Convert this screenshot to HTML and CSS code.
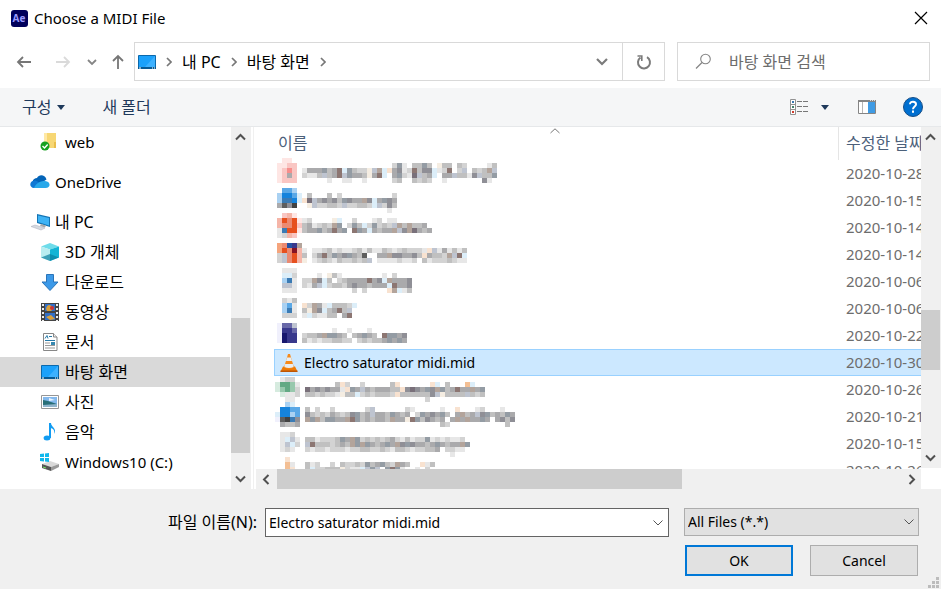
FILE: index.html
```html
<!DOCTYPE html>
<html lang="ko">
<head>
    <meta charset="UTF-8">
    <title>Choose a MIDI File</title>
    <link rel="stylesheet" href="styles.css">
</head>
<body>
    <header class="titlebar">
        <svg class="app-icon" width="17" height="17" viewBox="0 0 17 17">
            <rect width="17" height="17" rx="3" fill="#00005b"/>
            <text class="app-mark" x="8" y="12" text-anchor="middle" fill="#9999ff">Ae</text>
        </svg>
        <h1>Choose a MIDI File</h1>
        <button class="icon-btn close" aria-label="Close">
            <svg width="14" height="14" viewBox="0 0 14 14"><path d="M1 1l12 12M13 1L1 13" stroke="#000" stroke-width="1.2"/></svg>
        </button>
    </header>

    <div class="navbar">
        <button class="icon-btn" aria-label="Back"><svg width="16" height="14" viewBox="0 0 16 14"><path d="M15 7H2M7 2L2 7l5 5" fill="none" stroke="#767676" stroke-width="1.8"/></svg></button>
        <button class="icon-btn forward" aria-label="Forward"><svg width="16" height="14" viewBox="0 0 16 14"><path d="M1 7h13M9 2l5 5-5 5" fill="none" stroke="#dadada" stroke-width="1.8"/></svg></button>
        <button class="icon-btn recent" aria-label="Recent locations"><svg width="10" height="8" viewBox="0 0 10 8"><path d="M1 2l4 4 4-4" fill="none" stroke="#858585" stroke-width="1.8"/></svg></button>
        <button class="icon-btn up" aria-label="Up"><svg width="14" height="16" viewBox="0 0 14 16"><path d="M7 15V2M2 7l5-5 5 5" fill="none" stroke="#767676" stroke-width="1.8"/></svg></button>
        <div class="address">
            <nav class="crumbs">
                <svg width="18" height="14" viewBox="0 0 18 14"><use href="#i-desktop"/></svg>
                <svg class="sep" width="6" height="10"><use href="#i-sep"/></svg>
                <a href="#">내 PC</a>
                <svg class="sep" width="6" height="10"><use href="#i-sep"/></svg>
                <a href="#">바탕 화면</a>
                <svg class="sep" width="6" height="10"><use href="#i-sep"/></svg>
            </nav>
            <button class="icon-btn history" aria-label="Previous locations"><svg width="12" height="9" viewBox="0 0 12 9"><path d="M1 2l5 5 5-5" fill="none" stroke="#7b7b7b" stroke-width="2.2"/></svg></button>
            <button class="icon-btn refresh" aria-label="Refresh"><svg width="16" height="16" viewBox="0 0 16 16"><path d="M11 3.2a6 6 0 1 1-6.5.3" fill="none" stroke="#7b7b7b" stroke-width="2"/><path d="M1.5 2h4.300v5" fill="none" stroke="#7b7b7b" stroke-width="1.6"/></svg></button>
        </div>
        <div class="search">
            <svg width="17" height="17" viewBox="0 0 17 17"><circle cx="10.500" cy="6" r="4.800" fill="none" stroke="#858585" stroke-width="1.100"/><path d="M7 9.500L1 15.500" stroke="#858585" stroke-width="1.300"/></svg>
            <input type="text" aria-label="바탕 화면 검색" placeholder="바탕 화면 검색">
        </div>
    </div>

    <div class="toolbar">
        <button class="tool">구성 <svg width="8" height="5"><path d="M0 0h8L4 5z" fill="#1e395b"/></svg></button>
        <button class="tool">새 폴더</button>
        <button class="icon-btn view" aria-label="View">
            <svg width="18" height="16" viewBox="0 0 18 16">
                <path d="M.5.5h5v15h-5zM.5 5.500h5M.5 10.500h5" fill="#fff" stroke="#929292"/>
                <path d="M2 2h2v2H2z" fill="#3a78b0"/><path d="M2 7h2v2H2z" fill="#43806a"/><path d="M2 12h2v2H2z" fill="#d13b2c"/>
                <path d="M7 2.500h5M13 2.500h5M7 7.500h5M13 7.500h5M7 12.500h5M13 12.500h5" stroke="#777"/>
            </svg>
        </button>
        <button class="icon-btn view-more" aria-label="More views"><svg width="8" height="5"><path d="M0 0h8L4 5z" fill="#1e395b"/></svg></button>
        <button class="icon-btn preview" aria-label="Preview pane">
            <svg width="18" height="14" viewBox="0 0 18 14"><path d="M.5.5h17v13H.5z" fill="#fff" stroke="#858585"/><path d="M0 0h18v2H0z" fill="#858585"/><path d="M4.500 2v11" stroke="#b5b5b5"/><path d="M10 2h7v11h-7z" fill="#3f9be4"/><path d="M12 .5h5" stroke="#e0e0e0" stroke-dasharray="1 1"/></svg>
        </button>
        <button class="icon-btn help" aria-label="Help">
            <svg width="20" height="20" viewBox="0 0 20 20"><circle cx="10" cy="10" r="9.500" fill="#006fd0" stroke="#174e86"/><path d="M7 7.200C7 3.800 13 3.800 13 7.300 13 9.500 10 9.500 10 12.200M10 13.500v2.200" fill="none" stroke="#fff" stroke-width="2"/></svg>
        </button>
    </div>

    <main class="content">
        <nav class="tree">
            <a href="#" class="latin"><svg width="20" height="20" viewBox="0 0 20 20">
                <path d="M4 1h5v15H4z" fill="#ffe9a6"/><path d="M7 1h9v15H7z" fill="#f7d774"/><path d="M14 10h2v6h-2z" fill="#e9bd4b"/>
                <circle cx="5" cy="14" r="4.500" fill="#16a01f"/><path d="M2.500 14l2 2 3.200-3.500" fill="none" stroke="#fff" stroke-width="1.400"/></svg>web</a>
            <a href="#" class="root latin"><svg width="20" height="20" viewBox="0 0 20 20">
                <path d="M2.500 10C3 7 5 6 7 6c2-4 8-3.500 9.500 1.500l-6 4z" fill="#0364b8"/><path d="M4 16c-5-.5-5-7 .5-7.500 3 0 5 2 8 7.500z" fill="#0f78d4"/><path d="M4 16c1-3 5-7.500 11-7 6 .5 6 7 .5 7z" fill="#28a8ea"/></svg>OneDrive</a>
            <a href="#" class="root"><svg width="20" height="20" viewBox="0 0 20 20">
                <path d="M7 2l13 3v10L7 11z" fill="#1474b4"/><path d="M8 3.500l11 2.500v7.500L8 10z" fill="#3eb3f5"/><path d="M11 12l5 1.500-1 2-5-1.500z" fill="#aaa"/><path d="M1 14.500l4-1.500 10 3-4 2z" fill="#d5dae0" stroke="#aab" stroke-width=".5"/></svg>내 PC</a>
            <a href="#"><svg width="20" height="20" viewBox="0 0 20 20">
                <path d="M10 1l9 3.500L10 7.500 1 4.500z" fill="#6edcea"/><path d="M1 4.500l9 3V19l-9-3.500z" fill="#b9edf0"/><path d="M19 4.500l-9 3V19l9-3.500z" fill="#12b4d5"/><path d="M1 15.500l9-3.500 9 3.500L10 19z" fill="#087f9e" opacity=".7"/></svg>3D 개체</a>
            <a href="#"><svg width="20" height="20" viewBox="0 0 20 20"><path d="M6.500 2.500h7V10H18l-8 8.500L2 10h4.500z" fill="#3c99e8" stroke="#2b75b9"/></svg>다운로드</a>
            <a href="#"><svg width="20" height="20" viewBox="0 0 20 20">
                <path d="M1 1h18v18H1z" fill="#444"/><path d="M5 2h10v7H5zM5 11h10v7H5z" fill="#3270c8"/><path d="M6 7c1-5 4-5 8-1l-3 3H7zM6 15l5-2 4 4-5 1z" fill="#d9a13c"/><circle cx="12" cy="6" r="2" fill="#c33"/><path d="M3 2v17M17 2v17" stroke="#eee" stroke-width="2" stroke-dasharray="2 2"/></svg>동영상</a>
            <a href="#"><svg width="20" height="20" viewBox="0 0 20 20">
                <path d="M3.500 1.500h10l3.500 3.500v13.500H3.500z" fill="#fff" stroke="#878787"/><path d="M13.500 1.500V5H17" fill="#eee" stroke="#878787"/><path d="M5 6.500l2-3 1 3M9 4.500h3M5 8.500h10" fill="none" stroke="#2679a8"/><path d="M5 11h5M5 13.500h10M5 16h10" stroke="#999"/><path d="M11 10h4v3h-4z" fill="#3688b0"/></svg>문서</a>
            <a href="#" class="selected"><svg width="20" height="20" viewBox="-1 -3 20 20"><use href="#i-desktop"/></svg>바탕 화면</a>
            <a href="#"><svg width="20" height="20" viewBox="0 0 20 20">
                <path d="M1.500 3.500h17v13h-17z" fill="#fff" stroke="#969696"/><path d="M3 5h14v10H3z" fill="#84b9ed"/><path d="M3 8l5 1 9 3v3H3z" fill="#286e77"/><path d="M3 13l14-1v3H3z" fill="#8fb4cc"/><path d="M9 6l6 2-6 1z" fill="#e9f4ff"/></svg>사진</a>
            <a href="#"><svg width="20" height="20" viewBox="0 0 20 20"><ellipse cx="7" cy="16" rx="3.400" ry="2.500" fill="#129cf2"/><path d="M9 16V1h2c0 4 6 5 3.500 11 0-4-1-5-3.500-6v10z" fill="#129cf2"/></svg>음악</a>
            <a href="#" class="latin"><svg width="20" height="20" viewBox="0 0 20 20">
                <path d="M2 12l8-3 9 3-8 3z" fill="#d9d9d9"/><path d="M2 12l9 3v4l-9-3z" fill="#555"/><path d="M11 15l8-3v3l-8 4z" fill="#999"/><path d="M3 15l3 1" stroke="#6ee35e"/><path d="M0 2l4-.5V5H0zM5 1.500L9 1v4H5zM0 6h4v3.500L0 9zM5 6h4v4l-4-.5z" fill="#12b8ec"/></svg>Windows10 (C:)</a>
        </nav>
        <div class="scroll vertical">
            <button aria-label="Scroll up"><svg width="11" height="8"><use href="#i-up"/></svg></button>
            <div class="track tree-track"><span></span></div>
            <button aria-label="Scroll down"><svg width="11" height="8"><use href="#i-down"/></svg></button>
        </div>

        <section class="files">
            <div class="pane">
                <div class="list">
                    <svg class="sort" width="10" height="6" viewBox="0 0 10 6"><path d="M.5 5L5 .800 9.500 5" fill="none" stroke="#777"/></svg>
                    <table>
                        <thead>
                            <tr><th>이름</th><th class="date">수정한 날짜</th></tr>
                        </thead>
                        <tbody id="fileList"></tbody>
                    </table>
                </div>
                <div class="scroll horizontal">
                    <button aria-label="Scroll left"><svg width="8" height="11"><path d="M6.500 1L2 5.500 6.500 10" fill="none" stroke="#505050" stroke-width="2"/></svg></button>
                    <div class="track file-track-x"><span></span></div>
                    <button aria-label="Scroll right"><svg width="8" height="11"><path d="M1.500 1L6 5.500 1.500 10" fill="none" stroke="#505050" stroke-width="2"/></svg></button>
                </div>
            </div>
            <div class="scroll vertical file-scroll">
                <button aria-label="Scroll up"><svg width="11" height="8"><use href="#i-up"/></svg></button>
                <div class="track file-track-y"><span></span></div>
                <button aria-label="Scroll down"><svg width="11" height="8"><use href="#i-down"/></svg></button>
            </div>
        </section>
    </main>

    <form class="footer" onsubmit="return false">
        <div class="row">
            <label for="fileName">파일 이름(N):</label>
            <div class="combo">
                <input type="text" id="fileName" value="Electro saturator midi.mid">
                <button type="button" class="icon-btn" aria-label="Show file names"><svg width="10" height="6"><use href="#i-thin"/></svg></button>
            </div>
            <div class="select">
                <select aria-label="File type"><option>All Files (*.*)</option></select>
                <svg width="10" height="6"><use href="#i-thin"/></svg>
            </div>
        </div>
        <div class="row actions">
            <button type="submit" class="btn primary">OK</button>
            <button type="button" class="btn">Cancel</button>
        </div>
        <svg class="grip" width="11" height="11"><path d="M8 0h3v3H8zM4 4h3v3H4zM8 4h3v3H8zM0 8h3v3H0zM4 8h3v3H4zM8 8h3v3H8z" fill="#bcbcbc"/></svg>
    </form>

    <svg class="defs" width="0" height="0">
        <defs>
            <g id="i-desktop"><path d="M.5.5h17v12.500H.5z" fill="#1ba1fb" stroke="#0b69ac"/><path d="M17 1v11H7z" fill="#3db1ff"/><path d="M0 12h18v2H0z" fill="#075a95"/><path d="M1 13h2M14 13h1M16 13h1" stroke="#fff"/></g>
            <path id="i-sep" d="M1 1l4 4-4 4" fill="none" stroke="#777" stroke-width="1.700"/>
            <path id="i-up" d="M1 6.500L5.500 2 10 6.500" fill="none" stroke="#505050" stroke-width="2"/>
            <path id="i-down" d="M1 1.500L5.500 6 10 1.500" fill="none" stroke="#505050" stroke-width="2"/>
            <path id="i-thin" d="M.5.500L5 5 9.500.5" fill="none" stroke="#555"/>
        </defs>
    </svg>

    <script>
        const CELL = 5;
        const palette = {
            '1': '#e7e7e7', '2': '#d3d3d3', '3': '#c0c0c0', '4': '#aaaaac', '5': '#8f8f96', '6': '#79707a', '7': '#5e5e5e', '8': '#424242',
            'a': '#fee6e4', 'b': '#f9c6c3', 'c': '#f68d8b', 'd': '#a9d1f2', 'e': '#5aa8e6', 'f': '#1583dc', 'g': '#3b7bb4',
            'h': '#e6501f', 'i': '#ea8a72', 'j': '#f5b5a8', 'k': '#2452a4', 'l': '#851325', 'm': '#f5a47c', 'n': '#f5ede2',
            'o': '#dceef9', 'q': '#38388c', 'r': '#17176e', 's': '#6868a8', 't': '#f0f0fc', 'u': '#63a984', 'v': '#98c8ad',
            'w': '#d6ebdf', 'x': '#f3bf94', 'y': '#f8e2d0', 'z': '#bec4d0', 'A': '#949ca4', 'B': '#b3a49b', 'C': '#8c7672'
        };

        // x, y: where the cells start inside the row
        const files = [
            { date: '2020-10-28', x: 3, y: -2, cells: [
                '.aa.',
                'aabb...................2A1.33A3.n33.32....13',
                'abcb.1444A34CoA322nzBoy4512C355o12C.2z.323Bz',
                'ab4b.2113z34CzA443n4Co.4A216z34o.44z3315z33A',
                'abbb......1..11..1.....23..3232..1.......51'] },
            { date: '2020-10-15', x: 3, y: 1, cells: [
                '.eed',
                'dffeo.3...3.2..........2',
                'dggfoy6z45453A544B5o4A54',
                '4758..nz22332z22332oz253',
                '......................1'] },
            { date: '2020-10-14', x: 3, y: -1, cells: [
                '.bja',
                'jhiha12....no..2...12.11',
                'jiihb341232BA.2A3o2A232zB3B334',
                '1ghha344A34C4A.CA4o4344Bz5B6434',
                '12jb'] },
            { date: '2020-10-14', x: 3, y: 2, cells: [
                'mikqB',
                'mhilj1.11231211231311321232221yz141313',
                '2zihj3.24C3A45A437..44B554453y4332BzCo',
                '2zihjn.12321322323z.11112112.312223211'] },
            { date: '2020-10-06', x: 3, y: 0, cells: [
                '.111',
                '.oo2....1.n31........1.2',
                '.dg1.22B5o3.234444C45oB4445',
                '.zz1.214zo233245443444oC445',
                '.111...........2.2....yBo13'] },
            { date: '2020-10-06', x: 3, y: 3, cells: [
                '.213',
                '.de1.y2B41o3332o',
                '.dg1.3nB5o34C3z',
                '.222.1o21133 4C'] },
            { date: '2020-10-22', x: 3, y: 1, cells: [
                'tssz',
                'tqqs.......1..1...1',
                'trqq.2334BAA43.34A43.CAA45',
                'trqq.3121223322.232334A4A4'] },
            { date: '2020-10-30', name: 'Electro saturator midi.mid' },
            { date: '2020-10-26', x: 1, y: 1, cells: [
                '.122',
                'wuuv1.......3y2..2.....3y......yo.3...xo',
                'wvuv2.64545441yA4z4344433y5654A5BA34C44B4A',
                '.w112.3323221n33o2323332y3333335zn3333z323',
                '..11..........................2'] },
            { date: '2020-10-21', x: 1, y: -1, cells: [
                '..do',
                '.ffee.3.2..2......2z......21.....1..y...12...1',
                'offde.5323243235A34z443A434.2A454A3.4B34z5A343A4',
                't78g5.BAB3AA44BCA343443B44nCA35434.4B4B44A4.4535',
                '.4334............................32...........3'] },
            { date: '2020-10-15', x: 1, y: 2, cells: [
                '.112',
                '.1oz1.3312223A4BA2323234213122A1212112',
                '.1zo2.zC3332343BABA434A4B5A54434A4344BA',
                '.121..212212221223322321332122334.2211',
                '...................................1'] },
            { date: '2020-10-26', x: 1, y: 0, cells: [
                '..y..',
                '..x1..312..2.32232A34A32B43..y13',
                '..xy..3o22333n211ozAz.ACA1..1.2'] }
        ];

        const cone = `<svg class="cone" width="18" height="20" viewBox="0 0 18 20">
            <path d="M3 13.500h12l2.500 5H.5z" fill="#ee7b08"/><path d="M.5 17.500h17V19H.5z" fill="#bd5505"/>
            <path d="M8 1h2l4 13.500q-5 2.500-10 0z" fill="#f68a1b"/><path d="M7 4.500h4l1 3.500H6zM5.200 11h7.600l.8 3q-4.600 2-9.200 0z" fill="#e9eef2"/>
        </svg>`;

        function drawMosaic(file) {
            let rects = '';
            file.cells.forEach((line, row) => {
                [...line].forEach((key, col) => {
                    if (palette[key]) {
                        rects += `<rect x="${file.x + col * CELL}" y="${file.y + row * CELL}" width="5" height="5" fill="${palette[key]}"/>`;
                    }
                });
            });
            return `<svg class="mosaic" width="250" height="27" shape-rendering="crispEdges">${rects}</svg>`;
        }

        document.getElementById('fileList').innerHTML = files.map(file => `
            <tr${file.name ? ' class="selected"' : ''}>
                <td>${file.name ? `<span class="name">${cone}${file.name}</span>` : drawMosaic(file)}</td>
                <td class="date">${file.date}</td>
            </tr>
        `).join('');
    </script>
</body>
</html>
```

FILE: styles.css
```css
* { box-sizing: border-box; }
body { display: flex; flex-direction: column; height: 100vh; margin: 0; overflow: hidden; background: #fff; color: #000; font: 16px/20px "Noto Sans", "Noto Sans CJK KR", sans-serif; }
a { color: inherit; text-decoration: none; }
svg { display: block; flex: none; }
button, input, select { margin: 0; font: inherit; color: inherit; }
.icon-btn { display: flex; align-items: center; justify-content: center; padding: 0; border: none; background: none; }
.defs { position: absolute; }

.titlebar { display: flex; align-items: center; height: 36px; padding: 0 13px 0 11px; gap: 6px; }
.titlebar h1 { margin: 0; font-size: 15px; font-weight: normal; }
.app-mark { font: bold 10px "Open Sans", sans-serif; }
.close { margin-left: auto; }

.navbar { display: flex; align-items: center; height: 52px; padding: 0 11px 0 16px; }
.forward { margin-left: 23px; }
.recent { margin-left: 16px; }
.up { margin: 0 9px 0 14px; }
.address, .search { display: flex; height: 39px; margin-bottom: 1px; border: 1px solid #d9d9d9; }
.address { flex: 1; }
.crumbs { display: flex; flex: 1; align-items: center; gap: 10px; padding-left: 3px; white-space: nowrap; }
.history { width: 40px; }
.refresh { width: 42px; border-left: 1px solid #d9d9d9; }
.search { width: 253px; align-items: center; gap: 17px; margin-left: 12px; padding-left: 17px; }
.search input { flex: 1; min-width: 0; padding: 0; border: none; outline: none; }
.search input::placeholder { color: #6d6d6d; opacity: 1; }

.toolbar { display: flex; align-items: center; height: 39px; padding: 0 18px 0 22px; border-bottom: 1px solid #e6e8ea; background: #f5f6f7; color: #1e395b; }
.tool { display: flex; align-items: center; gap: 6px; margin-right: 37px; padding: 0; border: none; background: none; }
.view { margin-left: auto; }
.view-more { margin: 0 29px 0 13px; }
.help { margin-left: 27px; }

.content { display: flex; flex: 1; min-height: 0; }
.tree { width: 231px; overflow: hidden; }
.tree a { display: flex; align-items: center; gap: 5px; height: 30px; padding-left: 40px; margin-right: 1px; white-space: nowrap; }
.tree .root { margin-top: 10px; padding-left: 30px; }
.tree .latin { font-size: 15px; }
.tree .selected { background: #d9d9d9; }

.scroll { display: flex; background: #f0f0f0; }
.scroll button { display: flex; flex: none; align-items: center; justify-content: center; width: 19px; height: 20px; padding: 0; border: none; background: none; }
.vertical { flex-direction: column; width: 20px; }
.track { display: grid; flex: 1; }
.track span { background: #cdcdcd; }
.vertical .track span { grid-row: 2; margin-right: 1px; }
.horizontal .track span { grid-column: 2; }
.tree-track { grid-template-rows: 171fr 135fr 16fr; }
.file-track-y { grid-template-rows: 163fr 60fr 78fr; }
.file-track-x { grid-template-columns: 2fr 404fr 220fr; }

.files { display: flex; flex: 1; min-width: 0; margin-left: 2px; border-left: 1px solid #f0f0f0; }
.pane { display: flex; flex: 1; flex-direction: column; min-width: 0; }
.list { position: relative; flex: 1; min-height: 0; overflow: hidden; padding-left: 20px; }
.horizontal { height: 20px; margin-left: 2px; }
.file-scroll { width: 20px; margin-bottom: 21px; }
.sort { position: absolute; left: 296px; top: 1px; }
table { width: 100%; table-layout: fixed; border-collapse: separate; border-spacing: 0; }
th { height: 33px; padding: 0 4px 2px; color: #4c607a; font-weight: normal; text-align: left; }
td { height: 27px; padding: 0; }
.date { width: 83px; padding: 0 0 2px 8px; overflow: hidden; white-space: nowrap; text-overflow: clip; }
th.date { border-left: 1px solid #e5e5e5; padding-left: 7px; }
td.date { color: #6d6d6d; font-size: 15px; }
.mosaic { overflow: visible; }
.name { display: flex; align-items: center; gap: 6px; padding-left: 5px; font-size: 14px; }
tr.selected td { border-top: 1px solid #99d1ff; border-bottom: 1px solid #99d1ff; background: #cce8ff; }
tr.selected td:first-child { border-left: 1px solid #99d1ff; }

.footer { position: relative; height: 100px; padding: 19px 22px 0 20px; background: #f0f0f0; font-size: 14px; }
.row { display: flex; }
.row label { width: 237px; margin-right: 8px; line-height: 28px; font-size: 16px; text-align: right; }
.combo { display: flex; flex: 1; height: 29px; margin-right: 15px; border: 1px solid #646464; background: #fff; }
.combo input { flex: 1; min-width: 0; padding: 0 3px; border: none; outline: none; background: none; }
.combo button { width: 20px; }
.select { position: relative; width: 235px; height: 28px; }
.select select { width: 100%; height: 100%; padding: 0 3px; appearance: none; border: 1px solid #adadad; border-radius: 0; background: #e1e1e1; }
.select svg { position: absolute; right: 5px; top: 11px; pointer-events: none; }
.actions { justify-content: flex-end; gap: 17px; margin-top: 8px; padding-right: 1px; }
.btn { width: 108px; height: 31px; padding: 0; border: 1px solid #adadad; background: #e1e1e1; }
.primary { border: 2px solid #0078d7; }
.grip { position: absolute; right: 2px; bottom: 1px; }
```
